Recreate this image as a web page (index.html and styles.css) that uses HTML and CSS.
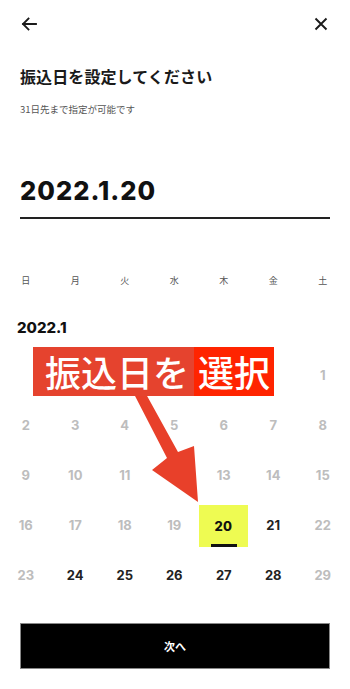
FILE: index.html
```html
<!DOCTYPE html>
<html lang="ja">
<head>
<meta charset="utf-8">
<title>振込日を設定</title>
<link rel="stylesheet" href="styles.css">
</head>
<body>
<div class="page">
  <header class="topbar">
    <svg class="icon back" width="16" height="16" viewBox="0 0 16 16"><path d="M15 8H2M7.5 2.5L2 8l5.5 5.5" fill="none" stroke="#1a1a1a" stroke-width="1.8" stroke-linecap="square"/></svg>
    <svg class="icon close" width="14" height="14" viewBox="0 0 14 14"><path d="M1.5 1.5l11 11M12.5 1.5l-11 11" fill="none" stroke="#1a1a1a" stroke-width="1.9"/></svg>
  </header>
  <main class="content">
    <h1 class="title">振込日を設定してください</h1>
    <p class="sub">31日先まで指定が可能です</p>
    <div class="date-field">2022.1.20</div>
    <div class="weekdays">
      <span>日</span><span>月</span><span>火</span><span>水</span><span>木</span><span>金</span><span>土</span>
    </div>
    <div class="month">2022.1</div>
    <div class="cal">
      <span></span><span></span><span></span><span></span><span></span><span></span><span class="off">1</span>
      <span class="off">2</span><span class="off">3</span><span class="off">4</span><span class="off">5</span><span class="off">6</span><span class="off">7</span><span class="off">8</span>
      <span class="off">9</span><span class="off">10</span><span class="off">11</span><span class="off">12</span><span class="off">13</span><span class="off">14</span><span class="off">15</span>
      <span class="off">16</span><span class="off">17</span><span class="off">18</span><span class="off">19</span><span class="sel"><b>20</b></span><span>21</span><span class="off">22</span>
      <span class="off">23</span><span>24</span><span>25</span><span>26</span><span>27</span><span>28</span><span class="off">29</span>
    </div>
    <button class="next">次へ</button>
  </main>
  <div class="callout"><span class="c1">振込日を</span><span class="c2">選択</span></div>
  <svg class="arrow" width="350" height="689" viewBox="0 0 350 689"><polygon points="134,394 146,394 178,452 194,446 198,502 152,470 167,458" fill="#e8402a"/></svg>
</div>
</body>
</html>
```
FILE: styles.css
```css
* { box-sizing: border-box; }
html, body { margin: 0; padding: 0; background: #fff; }
body {
  font-family: "Noto Sans CJK JP", "Noto Sans", sans-serif;
  color: #1a1a1a;
}
.page { position: relative; width: 350px; height: 689px; overflow: hidden; }
.topbar {
  height: 48px;
  display: flex;
  align-items: center;
  justify-content: space-between;
  padding: 0 22px 0 21px;
}
.content { padding: 0 20px; }
.title {
  margin: 16px 0 0;
  font-size: 16px;
  line-height: 24px;
  font-weight: 700;
  letter-spacing: 0.1px;
}
.sub {
  margin: 14px 0 0;
  font-size: 9.5px;
  line-height: 14px;
  color: #555;
}
.date-field {
  margin-top: 59px;
  font-family: Inter, "Liberation Sans", sans-serif;
  font-weight: 800;
  font-size: 25.5px;
  line-height: 32px;
  letter-spacing: 1px;
  padding-bottom: 10px;
  border-bottom: 2px solid #222;
  color: #111;
}
.weekdays {
  margin: 55px -20px 0 -19px;
  display: grid;
  grid-template-columns: repeat(7, 49.5px);
  font-size: 9px;
  line-height: 14px;
  color: #555;
  text-align: center;
}
.month {
  margin: 30px 0 0 -3px;
  font-family: Inter, "Liberation Sans", sans-serif;
  font-weight: 800;
  font-size: 15px;
  line-height: 20px;
  color: #111;
}
.cal {
  margin: 12px -20px 0 -19px;
  display: grid;
  grid-template-columns: repeat(7, 49.5px);
  grid-auto-rows: 50px;
  font-family: Inter, "Liberation Sans", sans-serif;
  font-weight: 700;
  font-size: 13px;
  color: #222;
}
.cal span { display: flex; align-items: center; justify-content: center; }
.cal .off { color: #bdbdbd; }
.cal .sel b {
  width: 49px;
  height: 42px;
  margin-top: 2px;
  margin-left: -1px;
  background: #eefb52;
  display: flex;
  align-items: center;
  justify-content: center;
  font-weight: 800;
  color: #111;
  position: relative;
}
.cal .sel b::after {
  content: "";
  position: absolute;
  left: 12px;
  right: 11px;
  bottom: 0;
  height: 3px;
  background: #111;
}
.next {
  display: block;
  width: 100%;
  height: 46px;
  margin-top: 23px;
  background: #000;
  border: 1px solid #888;
  color: #fff;
  font-family: "Noto Sans CJK JP", sans-serif;
  font-weight: 700;
  font-size: 11px;
}
.callout {
  position: absolute;
  left: 33px;
  top: 347px;
  height: 49px;
  display: flex;
  font-size: 36px;
  line-height: 49px;
  font-weight: 500;
  color: #fff;
  z-index: 2;
}
.callout .c1 { background: #e5432e; padding: 0 5px 0 12px; }
.callout .c2 { background: #ff2400; padding: 0 4px 0 4px; }
.arrow { position: absolute; left: 0; top: 0; z-index: 1; pointer-events: none; }
```
